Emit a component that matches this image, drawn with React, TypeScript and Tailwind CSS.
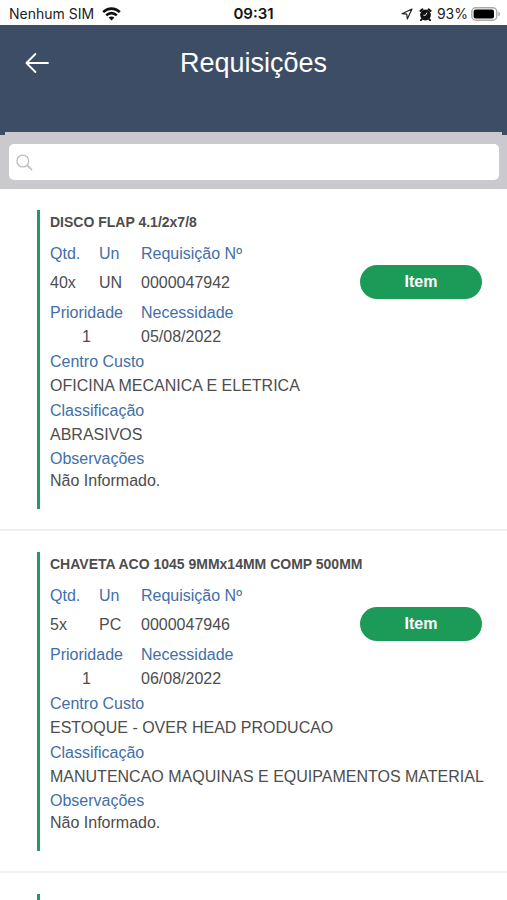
type Requisicao = {
  produto: string
  qtd: string
  un: string
  numero: string
  prioridade: string
  necessidade: string
  centroCusto: string
  classificacao: string
  observacoes: string
}

const requisicoes: Requisicao[] = [
  {
    produto: 'DISCO FLAP 4.1/2x7/8',
    qtd: '40x',
    un: 'UN',
    numero: '0000047942',
    prioridade: '1',
    necessidade: '05/08/2022',
    centroCusto: 'OFICINA MECANICA E ELETRICA',
    classificacao: 'ABRASIVOS',
    observacoes: 'Não Informado.'
  },
  {
    produto: 'CHAVETA ACO 1045 9MMx14MM COMP 500MM',
    qtd: '5x',
    un: 'PC',
    numero: '0000047946',
    prioridade: '1',
    necessidade: '06/08/2022',
    centroCusto: 'ESTOQUE - OVER HEAD PRODUCAO',
    classificacao: 'MANUTENCAO MAQUINAS E EQUIPAMENTOS MATERIAL',
    observacoes: 'Não Informado.'
  }
]

const StatusBar = () => (
  <div className="grid h-[25px] shrink-0 grid-cols-[1fr_auto_1fr] items-center bg-white px-[6px] pt-[3px] font-['Inter','Liberation_Sans',sans-serif] text-sm text-[#222]">
    <div className="ml-[3px] flex items-center gap-2">
      <span>Nenhum SIM</span>
      <svg width="19" height="14" viewBox="0 0 19 14" fill="none" stroke="#111" strokeWidth="2.6" aria-hidden="true">
        <path d="M1.2 5.2C6 0.4 13 0.4 17.8 5.2" />
        <path d="M4.2 8.4C7.2 5.4 11.8 5.4 14.8 8.4" />
        <path d="M9.5 13.6L6.6 10.6C8.2 9.1 10.8 9.1 12.4 10.6Z" fill="#111" stroke="none" />
      </svg>
    </div>
    <span className="text-[15px] font-semibold text-[#111]">09:31</span>
    <div className="flex items-center justify-end">
      <svg className="mr-[6px]" width="12" height="12" viewBox="0 0 12 12" fill="none" stroke="#222" strokeWidth="1.2" strokeLinejoin="round" aria-hidden="true">
        <path d="M11 1L1 5.7L5.8 6.2L6.3 11Z" />
      </svg>
      <svg className="mr-[5px]" width="13" height="13" viewBox="0 0 13 13" aria-hidden="true">
        <circle cx="6.5" cy="7" r="5.4" fill="#111" />
        <path d="M1.4 3L3.4 1.4M11.6 3L9.6 1.4M2.8 11.2L2 12.2M10.2 11.2L11 12.2" stroke="#111" strokeWidth="2" strokeLinecap="round" />
        <path d="M8 4.6L6.5 7.3H4.4" fill="none" stroke="#fff" strokeWidth="0.9" />
      </svg>
      <span>93%</span>
      <svg className="ml-[3px]" width="30" height="14" viewBox="0 0 30 14" aria-hidden="true">
        <rect x="0.8" y="0.8" width="25" height="12.4" rx="4" fill="#fff" stroke="#aaa" strokeWidth="1.4" />
        <rect x="2.6" y="2.6" width="20.4" height="8.8" rx="2" fill="#000" />
        <path d="M27.4 4.8C29.6 5.4 29.6 8.6 27.4 9.2Z" fill="#aaa" />
      </svg>
    </div>
  </div>
)

const Header = () => (
  <header className="flex h-[110px] shrink-0 flex-col justify-between bg-[#3d4d66]">
    <div className="grid grid-cols-[80px_1fr_80px] items-center pt-[18px]">
      <button type="button" aria-label="Voltar" className="ml-[25px] w-6">
        <svg width="24" height="22" viewBox="0 0 24 22" fill="none" stroke="#fff" strokeWidth="1.8" strokeLinecap="round" strokeLinejoin="round" aria-hidden="true">
          <path d="M23 11H1.6M10.4 2L1.4 11L10.4 20" />
        </svg>
      </button>
      <h1 className="text-center text-[27px] leading-10 text-white">Requisições</h1>
    </div>
    <div className="mx-[5px] h-[3px] bg-[#cac9ce]"></div>
  </header>
)

const Search = () => (
  <div className="shrink-0 bg-[#cac9ce] p-[9px] pr-2">
    <label className="flex h-9 items-center gap-2 rounded-[5px] bg-white pl-[7px] pr-2">
      <svg width="17" height="17" viewBox="0 0 17 17" fill="none" stroke="#bdbdbd" strokeWidth="1.3" aria-hidden="true">
        <circle cx="6.8" cy="7" r="5.9" />
        <path d="M11 11.2L16 16" strokeWidth="1.7" />
      </svg>
      <input type="search" aria-label="Pesquisar" className="min-w-0 flex-1 outline-none" />
    </label>
  </div>
)

const Card = ({ item }: { item: Requisicao }) => (
  <li className="border-b-2 border-[#f0f0f0] pb-5 pl-[37px] pt-[21px]">
    <article className="border-l-[3px] border-[#25995f] pb-[18px] pl-[10px]">
      <h2 className="text-sm font-bold leading-6">{item.produto}</h2>

      <div className="mt-[7px] flex items-start justify-between pr-[25px]">
        <div>
          <div className="grid grid-cols-[49px_42px_auto]">
            <dl>
              <dt className="leading-[25px] text-[#426fa8]">Qtd.</dt>
              <dd className="mt-[5px] leading-6">{item.qtd}</dd>
            </dl>
            <dl>
              <dt className="leading-[25px] text-[#426fa8]">Un</dt>
              <dd className="mt-[5px] leading-6">{item.un}</dd>
            </dl>
            <dl>
              <dt className="leading-[25px] text-[#426fa8]">Requisição Nº</dt>
              <dd className="mt-[5px] leading-6">{item.numero}</dd>
            </dl>
          </div>
          <div className="mt-[5px] grid grid-cols-[91px_auto]">
            <dl className="justify-self-start">
              <dt className="leading-[25px] text-[#426fa8]">Prioridade</dt>
              <dd className="text-center leading-6">{item.prioridade}</dd>
            </dl>
            <dl>
              <dt className="leading-[25px] text-[#426fa8]">Necessidade</dt>
              <dd className="leading-6">{item.necessidade}</dd>
            </dl>
          </div>
        </div>
        <button type="button" className="mt-6 h-[34px] w-[122px] rounded-full bg-[#1c9a58] font-bold text-white">
          Item
        </button>
      </div>

      <dl className="pr-2">
        <dt className="leading-[25px] text-[#426fa8]">Centro Custo</dt>
        <dd className="leading-6">{item.centroCusto}</dd>
        <dt className="leading-[25px] text-[#426fa8]">Classificação</dt>
        <dd className="leading-6">{item.classificacao}</dd>
        <dt className="leading-6 text-[#426fa8]">Observações</dt>
        <dd className="leading-5">{item.observacoes}</dd>
      </dl>
    </article>
  </li>
)

const App = () => {
  return (
    <div className="flex h-dvh flex-col overflow-hidden bg-white font-['Liberation_Sans',Arial,sans-serif] text-base text-[#4d4d4d]">
      <StatusBar />
      <Header />
      <Search />
      <main className="flex min-h-0 flex-1 flex-col overflow-hidden">
        <ul className="flex flex-1 flex-col">
          {requisicoes.map((item) => (
            <Card key={item.numero} item={item} />
          ))}
          {/* próxima requisição ainda carregando */}
          <li className="flex flex-1 pl-[37px] pt-[21px]">
            <div className="border-l-[3px] border-[#25995f]"></div>
          </li>
        </ul>
      </main>
    </div>
  )
}

export default App
